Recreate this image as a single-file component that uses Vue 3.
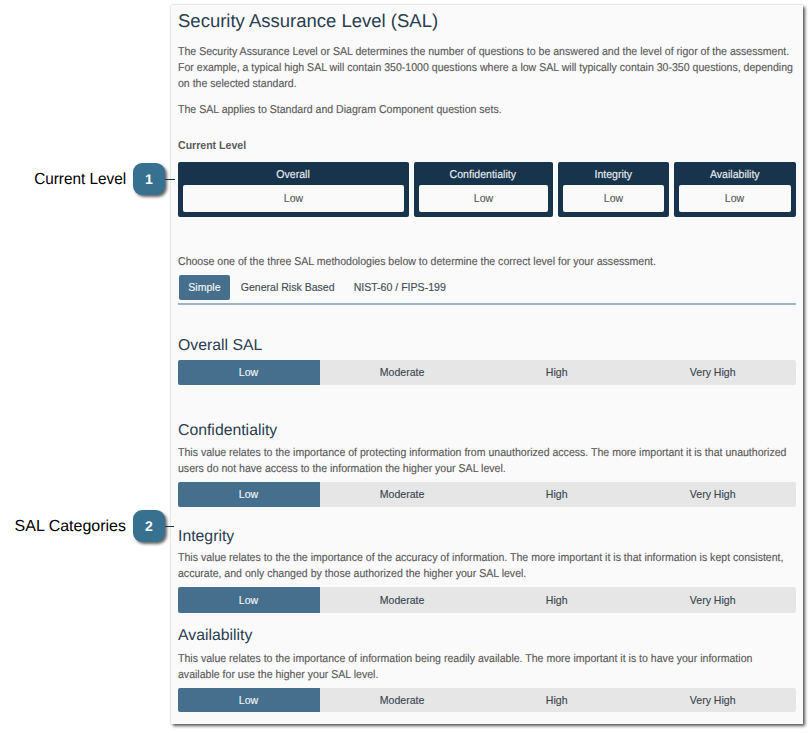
<script setup>
import { ref } from 'vue'

const levels = ['Low', 'Moderate', 'High', 'Very High']
const current = [
  { name: 'Overall', value: 'Low' },
  { name: 'Confidentiality', value: 'Low' },
  { name: 'Integrity', value: 'Low' },
  { name: 'Availability', value: 'Low' },
]
const tabs = ['Simple', 'General Risk Based', 'NIST-60 / FIPS-199']
const activeTab = ref('Simple')
const categories = ref([
  { id: 'overall', title: 'Overall SAL', lines: [], level: 'Low' },
  {
    id: 'confidentiality',
    title: 'Confidentiality',
    lines: [
      'This value relates to the importance of protecting information from unauthorized access. The more important it is that unauthorized',
      'users do not have access to the information the higher your SAL level.',
    ],
    level: 'Low',
  },
  {
    id: 'integrity',
    title: 'Integrity',
    lines: [
      'This value relates to the the importance of the accuracy of information. The more important it is that information is kept consistent,',
      'accurate, and only changed by those authorized the higher your SAL level.',
    ],
    level: 'Low',
  },
  {
    id: 'availability',
    title: 'Availability',
    lines: [
      'This value relates to the importance of information being readily available. The more important it is to have your information',
      'available for use the higher your SAL level.',
    ],
    level: 'Low',
  },
])
</script>

<template>
  <div class="page">
    <main class="panel">
      <h1>Security Assurance Level (SAL)</h1>
      <p class="intro">
        The Security Assurance Level or SAL determines the number of questions to be answered and the level of rigor of the assessment.<br />
        For example, a typical high SAL will contain 350-1000 questions where a low SAL will typically contain 30-350 questions, depending<br />
        on the selected standard.
      </p>
      <p class="applies">The SAL applies to Standard and Diagram Component question sets.</p>
      <h3>Current Level</h3>
      <div class="cards">
        <div v-for="c in current" :key="c.name" class="card">
          <div class="card-name"><span class="narrow">{{ c.name }}</span></div>
          <div class="card-value"><span class="narrow">{{ c.value }}</span></div>
        </div>
      </div>
      <p class="choose">Choose one of the three SAL methodologies below to determine the correct level for your assessment.</p>
      <nav class="tabs">
        <button v-for="t in tabs" :key="t" class="tab" :class="{ active: t === activeTab }" @click="activeTab = t">
          <span class="narrow">{{ t }}</span>
        </button>
      </nav>
      <section v-for="cat in categories" :key="cat.id" class="category" :class="cat.id">
        <h2>{{ cat.title }}</h2>
        <p v-if="cat.lines.length" class="desc">
          <span v-for="line in cat.lines" :key="line">{{ line }}</span>
        </p>
        <div class="bar">
          <button v-for="l in levels" :key="l" class="level" :class="{ active: l === cat.level }" @click="cat.level = l">
            <span class="narrow">{{ l }}</span>
          </button>
        </div>
      </section>
    </main>
    <div class="callout first">
      <span class="callout-label">Current Level</span><span class="badge">1</span><span class="lead"></span>
    </div>
    <div class="callout second">
      <span class="callout-label">SAL Categories</span><span class="badge">2</span><span class="lead"></span>
    </div>
  </div>
</template>

<style>
body { margin: 0; background: #fff; }
</style>

<style scoped>
* { box-sizing: border-box; }
.page {
  position: relative;
  width: 812px;
  height: 733px;
  padding: 5px 0 0 171px;
  overflow: hidden;
  font-family: "Liberation Sans", Arial, sans-serif;
  font-size: 11.4px;
  text-rendering: geometricPrecision;
  line-height: 16px;
  color: #5a5a5a;
}
.panel {
  width: 632px;
  height: 719px;
  padding: 5px 7px 0;
  background: #fafafa;
  box-shadow: 2px 2px 3px rgba(0, 0, 0, 0.65), 0 0 2px rgba(0, 0, 0, 0.2);
}
h1, h2, h3, p { margin: 0; white-space: nowrap; }
p, h3 { width: max-content; transform: scaleX(0.927); transform-origin: left; }
p, .narrow { -webkit-text-stroke: 0.15px; }
.narrow { display: inline-block; transform: scaleX(0.927); }
h1 { font-size: 18.5px; line-height: 22px; font-weight: 400; color: #2b3e50; }
.intro { margin-top: 12px; }
.applies { margin-top: 10px; }
h3 { margin-top: 20px; font-size: 11.4px; line-height: 16px; }
.cards {
  display: grid;
  grid-template-columns: 230.5px 139.5px 110.5px 122.5px;
  gap: 5px;
  margin-top: 8px;
}
.card { height: 55px; padding: 0 5px 5px; background: #17344c; border-radius: 2px; text-align: center; }
.card-name { height: 23px; line-height: 27px; color: #e8edf0; }
.card-value { height: 27px; line-height: 29px; background: #fafafa; border-radius: 2px; }
.choose { margin-top: 37px; }
.tabs { display: flex; height: 30px; margin-top: 5px; padding: 0 1px; border-bottom: 2px solid #9db4c7; }
button { border: 0; margin: 0; font: inherit; background: none; color: #444d55; white-space: nowrap; }
.tab { height: 25px; padding: 0 6px 2px; border-radius: 2px; line-height: 22px; }
.tab.active { width: 51px; padding: 0 0 2px; margin-right: 1px; background: #456f8c; color: #f3f6f8; }
.category { padding-top: 31px; }
h2 { font-size: 15.8px; line-height: 20px; font-weight: 400; color: #2b3e50; }
.desc { margin-top: 4px; }
.desc span { display: block; }
.bar {
  display: grid;
  grid-template-columns: 141.5px 164.5px 145px 1fr;
  height: 25px;
  margin-top: 5px;
  border-radius: 2px;
  overflow: hidden;
  background: #e6e6e6;
}
.overall .bar { margin-top: 4px; }
.level { padding: 0 0 1px; line-height: 24px; color: #3a4650; }
.level.active { background: #456f8c; color: #f3f6f8; }
.confidentiality { padding-top: 36px; }
.integrity { padding-top: 20px; }
.integrity .desc { margin-top: 3px; }
.integrity .bar { height: 26px; }
.integrity .level, .availability .level { padding: 0; }
.availability { padding-top: 13px; }
.availability .desc { margin-top: 5px; }
.availability .bar { height: 24px; }
.callout { position: absolute; right: 637px; display: flex; align-items: center; height: 32px; }
.first { top: 163px; }
.second { top: 510px; }
.callout-label {
  font-size: 16px;
  line-height: 20px;
  color: #000;
  white-space: nowrap;
  margin-right: 7px;
  padding-top: 2px;
  transform-origin: right;
}
.first .callout-label { transform: scaleX(0.957); }
.badge {
  width: 32px;
  height: 32px;
  border-radius: 9px;
  background: #38708f;
  color: #fff;
  font-size: 14px;
  font-weight: 700;
  line-height: 32px;
  text-align: center;
  box-shadow: 2px 2px 3px rgba(0, 0, 0, 0.6);
}
.lead { width: 10px; height: 1px; background: #17344c; }
.second .lead { width: 9px; margin-right: 1px; }
</style>
